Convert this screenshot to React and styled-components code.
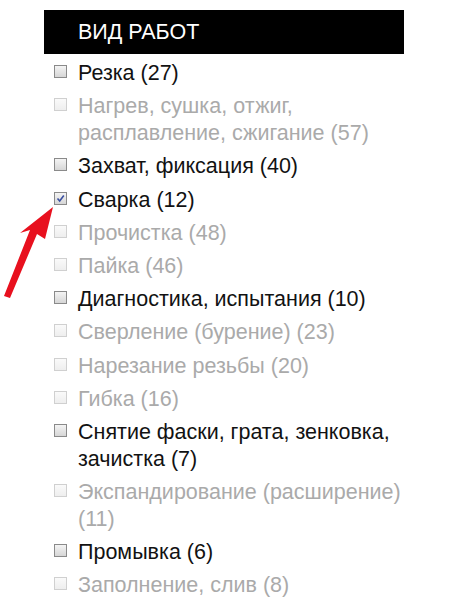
import React from "react"
import styled, { createGlobalStyle } from "styled-components"

const GlobalStyle = createGlobalStyle`
  body {
    margin: 0;
    background: #fff;
    font-family: "Liberation Sans", Arial, sans-serif;
  }
`

const Page = styled.div`
  position: relative;
  width: 450px;
  height: 600px;
  overflow: hidden;
  padding: 10px 0 0 44px;
  box-sizing: border-box;
`
const Panel = styled.div`
  width: 360px;
`
const Header = styled.div`
  height: 44px;
  background: #000;
  color: #fff;
  font-size: 21.5px;
  line-height: 44px;
  padding-left: 34px;
  text-transform: uppercase;
`
const List = styled.ul`
  list-style: none;
  margin: 6px 0 0;
  padding: 0 0 0 10px;
  display: flex;
  flex-direction: column;
  gap: 6.2px;
`
const Item = styled.li`
  display: flex;
  align-items: flex-start;
  gap: 11px;
  font-size: 21.5px;
  line-height: 27px;
  color: ${props => (props.disabled ? "#aaa" : "#121212")};
`
const Box = styled.span`
  flex: none;
  width: 11px;
  height: 11px;
  margin-top: 5px;
  border: 1px solid ${props => (props.disabled ? "#d0d0d0" : "#8a8a8a")};
  background: ${props =>
    props.disabled
      ? "linear-gradient(#fafafa, #eee)"
      : "linear-gradient(#f4f4f4, #d6d6d6)"};
  display: flex;
  align-items: center;
  justify-content: center;
`
const Label = styled.span`
  flex: 1;
`
const Arrow = styled.svg`
  position: absolute;
  left: 0;
  top: 200px;
`

const items = [
  { text: "Резка (27)" },
  { text: "Нагрев, сушка, отжиг, расплавление, сжигание (57)", disabled: true },
  { text: "Захват, фиксация (40)" },
  { text: "Сварка (12)", checked: true },
  { text: "Прочистка (48)", disabled: true },
  { text: "Пайка (46)", disabled: true },
  { text: "Диагностика, испытания (10)" },
  { text: "Сверление (бурение) (23)", disabled: true },
  { text: "Нарезание резьбы (20)", disabled: true },
  { text: "Гибка (16)", disabled: true },
  { text: "Снятие фаски, грата, зенковка, зачистка (7)" },
  { text: "Экспандирование (расширение) (11)", disabled: true },
  { text: "Промывка (6)" },
  { text: "Заполнение, слив (8)", disabled: true },
]

const App = () => {
  return (
    <Page>
      <GlobalStyle />
      <Panel>
        <Header>Вид работ</Header>
        <List>
          {items.map(item => (
            <Item key={item.text} disabled={item.disabled}>
              <Box disabled={item.disabled}>
                {item.checked && (
                  <svg width="9" height="9" viewBox="0 0 9 9">
                    <path d="M1.5 4.5 L3.7 7 L7.8 1.5" fill="none" stroke="#3a4fa0" strokeWidth="1.6" />
                  </svg>
                )}
              </Box>
              <Label>{item.text}</Label>
            </Item>
          ))}
        </List>
      </Panel>
      <Arrow width="60" height="100" viewBox="0 0 60 100">
        <polygon points="53,7 45,39 37,34 10,98 4,96 30,30 20,33" fill="#e8101e" />
      </Arrow>
    </Page>
  )
}

export default App
